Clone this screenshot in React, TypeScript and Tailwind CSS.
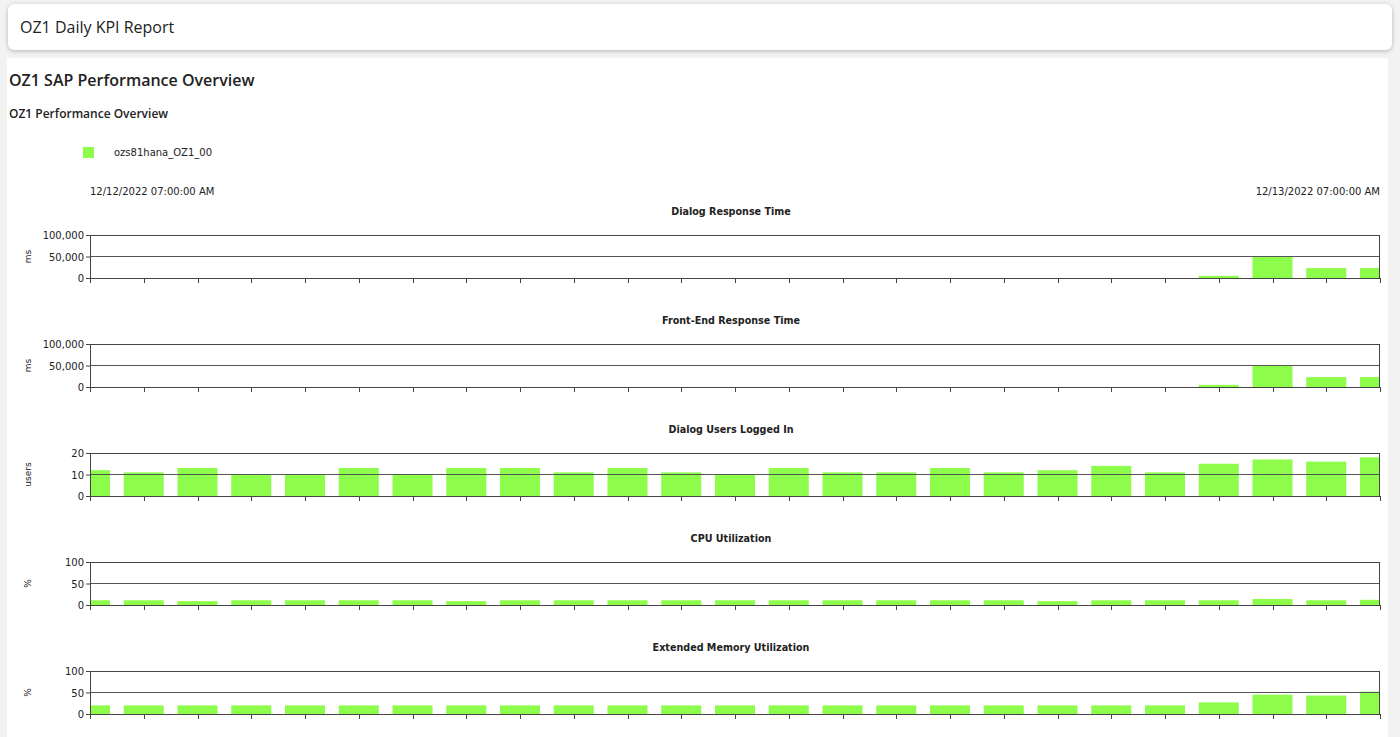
import React from "react";

const G = "#8efc4a";
type C = { title: string; unit: string; max: number; labels: string[]; data: number[] };
const charts: C[] = [
  { title: "Dialog Response Time", unit: "ms", max: 100000, labels: ["100,000", "50,000", "0"], data: [...Array(21).fill(0), 5000, 50000, 23000, 23000] },
  { title: "Front-End Response Time", unit: "ms", max: 100000, labels: ["100,000", "50,000", "0"], data: [...Array(21).fill(0), 5000, 50000, 23000, 23000] },
  { title: "Dialog Users Logged In", unit: "users", max: 20, labels: ["20", "10", "0"], data: [12, 11, 13, 10, 10, 13, 10, 13, 13, 11, 13, 11, 10, 13, 11, 11, 13, 11, 12, 14, 11, 15, 17, 16, 18] },
  { title: "CPU Utilization", unit: "%", max: 100, labels: ["100", "50", "0"], data: [11, 11, 9, 11, 11, 11, 11, 9, 11, 11, 11, 11, 11, 11, 11, 11, 11, 11, 9, 11, 11, 11, 14, 11, 12] },
  { title: "Extended Memory Utilization", unit: "%", max: 100, labels: ["100", "50", "0"], data: [20, 20, 20, 20, 20, 20, 20, 20, 20, 20, 20, 20, 20, 20, 20, 20, 20, 20, 20, 20, 20, 27, 45, 43, 52] },
];

const L = 90, R = 1380, T = 35, H = 43;
const step = (R - L) / 24;

function Chart({ c, idx }: { c: C; idx: number }) {
  return (
    <svg width={1392} height={109} className="block" style={{ fontFamily: "'DejaVu Sans', sans-serif" }}>
      <text x={731} y={15} fontSize={9.6} fontWeight="bold" textAnchor="middle" fill="#222">{c.title}</text>
      <defs><clipPath id={"clip" + idx}><rect x={L} y={0} width={R - L} height={109} /></clipPath></defs>
      <g clipPath={`url(#clip${idx})`}>
        {c.data.map((v, i) => {
          const h = (v / c.max) * H;
          return <rect key={i} x={L + i * step - 20} y={T + H - h} width={40} height={h} fill={G} />;
        })}
      </g>
      <line x1={L} y1={T + H / 2} x2={R} y2={T + H / 2} stroke="#555" strokeWidth={1} />
      <rect x={L + 0.5} y={T + 0.5} width={R - L - 1} height={H} fill="none" stroke="#444" strokeWidth={1} />
      {Array.from({ length: 25 }).map((_, i) => (
        <line key={i} x1={Math.round(L + i * step) + 0.5} y1={T + H} x2={Math.round(L + i * step) + 0.5} y2={T + H + 5} stroke="#444" />
      ))}
      {c.labels.map((l, i) => (
        <g key={l}>
          <line x1={L - 4} y1={T + (i * H) / 2 + 0.5} x2={L} y2={T + (i * H) / 2 + 0.5} stroke="#444" />
          <text x={L - 6} y={T + (i * H) / 2 + 4} fontSize={10} textAnchor="end" fill="#222">{l}</text>
        </g>
      ))}
      <text transform={`translate(31 ${T + H / 2}) rotate(-90)`} fontSize={9} textAnchor="middle" fill="#222">{c.unit}</text>
    </svg>
  );
}

export default function App() {
  return (
    <div className="min-h-[737px] bg-[#f2f2f2] pt-1 overflow-hidden" style={{ fontFamily: "'Open Sans', 'Noto Sans', sans-serif" }}>
      <div className="mx-2 h-[46px] bg-white rounded-md shadow-[0_1px_4px_rgba(0,0,0,0.25)] flex items-center px-3 text-[16px] text-[#222]">OZ1 Daily KPI Report</div>
      <div className="ml-[7px] mr-3 mt-2 bg-white pb-4">
        <div className="pl-[2px] pt-[10px] text-[16px] font-semibold text-[#222] leading-6">OZ1 SAP Performance Overview</div>
        <div className="pl-[2px] pt-[12px] text-[12px] font-semibold text-[#222] leading-5">OZ1 Performance Overview</div>
        <div className="flex items-center mt-[20px] pl-[76px] h-[16px]" style={{ fontFamily: "'DejaVu Sans', sans-serif" }}>
          <div className="w-[11px] h-[11px] bg-[#8efc4a]" />
          <span className="ml-[20px] text-[10px] text-[#222]">ozs81hana_OZ1_00</span>
        </div>
        <div className="flex justify-between mt-[24px] pl-[83px] pr-[8px] text-[10px] text-[#222] h-[16px]" style={{ fontFamily: "'DejaVu Sans', sans-serif" }}>
          <span>12/12/2022 07:00:00 AM</span>
          <span>12/13/2022 07:00:00 AM</span>
        </div>
        <div className="-ml-[7px]">
          {charts.map((c, i) => <Chart key={c.title} c={c} idx={i} />)}
        </div>
      </div>
    </div>
  );
}
